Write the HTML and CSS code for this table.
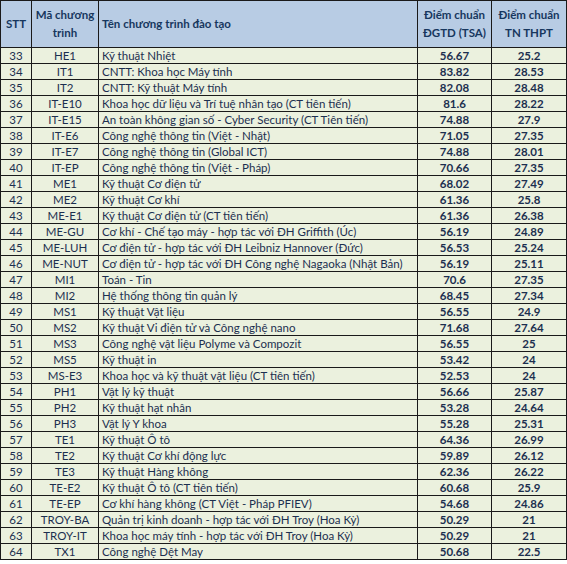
FILE: index.html
```html
<!DOCTYPE html>
<html lang="vi">
<head>
<meta charset="utf-8">
<link rel="stylesheet" href="styles.css">
</head>
<body>
<table class="scores">
<colgroup>
<col class="c-stt"><col class="c-code"><col class="c-name"><col class="c-tsa"><col class="c-thpt">
</colgroup>
<thead>
<tr>
<th class="center">STT</th>
<th class="center">Mã chương<br>trình</th>
<th class="left">Tên chương trình đào tạo</th>
<th class="center">Điểm chuẩn<br>ĐGTD (TSA)</th>
<th class="center">Điểm chuẩn<br>TN THPT</th>
</tr>
</thead>
<tbody>
<tr><td class="center">33</td><td class="center">HE1</td><td>Kỹ thuật Nhiệt</td><td class="num">56.67</td><td class="num">25.2</td></tr>
<tr><td class="center">34</td><td class="center">IT1</td><td>CNTT: Khoa học Máy tính</td><td class="num">83.82</td><td class="num">28.53</td></tr>
<tr><td class="center">35</td><td class="center">IT2</td><td>CNTT: Kỹ thuật Máy tính</td><td class="num">82.08</td><td class="num">28.48</td></tr>
<tr><td class="center">36</td><td class="center">IT-E10</td><td>Khoa học dữ liệu và Trí tuệ nhân tạo (CT tiên tiến)</td><td class="num">81.6</td><td class="num">28.22</td></tr>
<tr><td class="center">37</td><td class="center">IT-E15</td><td>An toàn không gian số - Cyber Security (CT Tiên tiến)</td><td class="num">74.88</td><td class="num">27.9</td></tr>
<tr><td class="center">38</td><td class="center">IT-E6</td><td>Công nghệ thông tin (Việt - Nhật)</td><td class="num">71.05</td><td class="num">27.35</td></tr>
<tr><td class="center">39</td><td class="center">IT-E7</td><td>Công nghệ thông tin (Global ICT)</td><td class="num">74.88</td><td class="num">28.01</td></tr>
<tr><td class="center">40</td><td class="center">IT-EP</td><td>Công nghệ thông tin (Việt - Pháp)</td><td class="num">70.66</td><td class="num">27.35</td></tr>
<tr><td class="center">41</td><td class="center">ME1</td><td>Kỹ thuật Cơ điện tử</td><td class="num">68.02</td><td class="num">27.49</td></tr>
<tr><td class="center">42</td><td class="center">ME2</td><td>Kỹ thuật Cơ khí</td><td class="num">61.36</td><td class="num">25.8</td></tr>
<tr><td class="center">43</td><td class="center">ME-E1</td><td>Kỹ thuật Cơ điện tử (CT tiên tiến)</td><td class="num">61.36</td><td class="num">26.38</td></tr>
<tr><td class="center">44</td><td class="center">ME-GU</td><td>Cơ khí - Chế tạo máy - hợp tác với ĐH Griffith (Úc)</td><td class="num">56.19</td><td class="num">24.89</td></tr>
<tr><td class="center">45</td><td class="center">ME-LUH</td><td>Cơ điện tử - hợp tác với ĐH Leibniz Hannover (Đức)</td><td class="num">56.53</td><td class="num">25.24</td></tr>
<tr><td class="center">46</td><td class="center">ME-NUT</td><td>Cơ điện tử - hợp tác với ĐH Công nghệ Nagaoka (Nhật Bản)</td><td class="num">56.19</td><td class="num">25.11</td></tr>
<tr><td class="center">47</td><td class="center">MI1</td><td>Toán - Tin</td><td class="num">70.6</td><td class="num">27.35</td></tr>
<tr><td class="center">48</td><td class="center">MI2</td><td>Hệ thống thông tin quản lý</td><td class="num">68.45</td><td class="num">27.34</td></tr>
<tr><td class="center">49</td><td class="center">MS1</td><td>Kỹ thuật Vật liệu</td><td class="num">56.55</td><td class="num">24.9</td></tr>
<tr><td class="center">50</td><td class="center">MS2</td><td>Kỹ thuật Vi điện tử và Công nghệ nano</td><td class="num">71.68</td><td class="num">27.64</td></tr>
<tr><td class="center">51</td><td class="center">MS3</td><td>Công nghệ vật liệu Polyme và Compozit</td><td class="num">56.55</td><td class="num">25</td></tr>
<tr><td class="center">52</td><td class="center">MS5</td><td>Kỹ thuật in</td><td class="num">53.42</td><td class="num">24</td></tr>
<tr><td class="center">53</td><td class="center">MS-E3</td><td>Khoa học và kỹ thuật vật liệu (CT tiên tiến)</td><td class="num">52.53</td><td class="num">24</td></tr>
<tr><td class="center">54</td><td class="center">PH1</td><td>Vật lý kỹ thuật</td><td class="num">56.66</td><td class="num">25.87</td></tr>
<tr><td class="center">55</td><td class="center">PH2</td><td>Kỹ thuật hạt nhân</td><td class="num">53.28</td><td class="num">24.64</td></tr>
<tr><td class="center">56</td><td class="center">PH3</td><td>Vật lý Y khoa</td><td class="num">55.28</td><td class="num">25.31</td></tr>
<tr><td class="center">57</td><td class="center">TE1</td><td>Kỹ thuật Ô tô</td><td class="num">64.36</td><td class="num">26.99</td></tr>
<tr><td class="center">58</td><td class="center">TE2</td><td>Kỹ thuật Cơ khí động lực</td><td class="num">59.89</td><td class="num">26.12</td></tr>
<tr><td class="center">59</td><td class="center">TE3</td><td>Kỹ thuật Hàng không</td><td class="num">62.36</td><td class="num">26.22</td></tr>
<tr><td class="center">60</td><td class="center">TE-E2</td><td>Kỹ thuật Ô tô (CT tiên tiến)</td><td class="num">60.68</td><td class="num">25.9</td></tr>
<tr><td class="center">61</td><td class="center">TE-EP</td><td>Cơ khí hàng không (CT Việt - Pháp PFIEV)</td><td class="num">54.68</td><td class="num">24.86</td></tr>
<tr><td class="center">62</td><td class="center">TROY-BA</td><td>Quản trị kinh doanh - hợp tác với ĐH Troy (Hoa Kỳ)</td><td class="num">50.29</td><td class="num">21</td></tr>
<tr><td class="center">63</td><td class="center">TROY-IT</td><td>Khoa học máy tính - hợp tác với ĐH Troy (Hoa Kỳ)</td><td class="num">50.29</td><td class="num">21</td></tr>
<tr><td class="center">64</td><td class="center">TX1</td><td>Công nghệ Dệt May</td><td class="num">50.68</td><td class="num">22.5</td></tr>
</tbody>
</table>
</body>
</html>
```
FILE: styles.css
```css
html, body {
  margin: 0;
  padding: 0;
  background: #ffffff;
}
.scores {
  border-collapse: collapse;
  table-layout: fixed;
  width: 566px;
  font-family: Lato, "Open Sans", "Liberation Sans", sans-serif;
  font-size: 11.5px;
  color: #1c2f4f;
}
.c-stt { width: 31px; }
.c-code { width: 67px; }
.c-name { width: 319px; }
.c-tsa { width: 74px; }
.c-thpt { width: 75px; }
.scores th {
  background: #b8cce4;
  border: 1px solid #1a1a1a;
  height: 46px;
  padding: 0 3px;
  line-height: 18px;
  font-weight: 700;
  color: #17375e;
  vertical-align: middle;
}
.scores td {
  background: #ebf1de;
  border: 1px solid #1a1a1a;
  height: 15px;
  padding: 0 3px;
  line-height: 14px;
  white-space: nowrap;
  overflow: hidden;
  vertical-align: middle;
}
.center { text-align: center; }
.left { text-align: left; }
.scores td.num {
  text-align: center;
  font-weight: 700;
}
```
